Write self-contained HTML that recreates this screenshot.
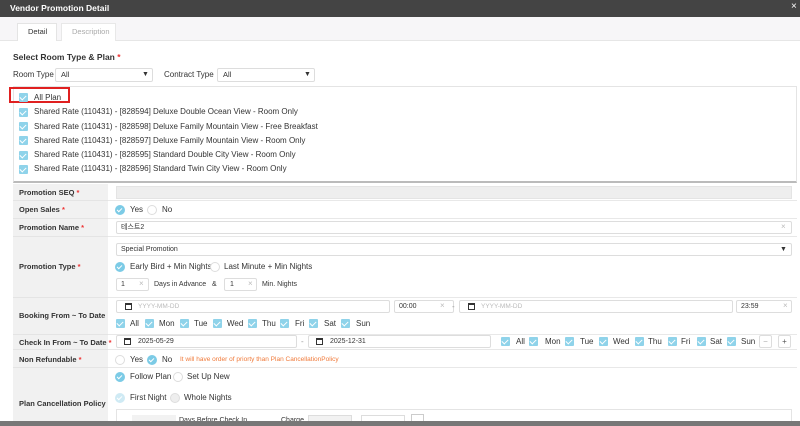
<!DOCTYPE html>
<html><head><meta charset="utf-8"><style>
*{box-sizing:border-box;margin:0;padding:0}
body{width:800px;height:426px;overflow:hidden;background:#fff;font-family:"Liberation Sans","Noto Sans CJK KR",sans-serif;font-size:8px;color:#333;position:relative}
.a{position:absolute}
.t{position:absolute;white-space:nowrap;line-height:10px}
.inp{position:absolute;border:1px solid #ddd;background:#fff;height:13px;border-radius:2px}
.cb{position:absolute;width:9px;height:9px;background:#8fd3ea;border-radius:1px}
.cb:after{content:"";position:absolute;left:2px;top:1px;width:3px;height:5px;border:solid #fff;border-width:0 1px 1px 0;transform:rotate(45deg)}
.rd{position:absolute;width:10px;height:10px;border-radius:50%;background:#7ccbe6}
.rd:after{content:"";position:absolute;left:3px;top:2px;width:2px;height:4px;border:solid #fff;border-width:0 1px 1px 0;transform:rotate(45deg)}
.ro{position:absolute;width:10px;height:10px;border-radius:50%;border:1px solid #ddd;background:#fff}
.lab{position:absolute;left:13px;width:95px;background:#f1f1f1;border-bottom:1px solid #e4e4e4}
.row{position:absolute;left:108px;right:3px;border-bottom:1px solid #e8e8e8}
.lt{position:absolute;left:19px;font-weight:bold;font-size:7.5px;color:#333;white-space:nowrap}
.req{color:#e33}
.x{color:#bbb;position:absolute}
.cal{position:absolute;width:7px;height:7px;border:1px solid #333;border-top-width:2px}
</style></head><body>
<div class="a" style="left:0;top:0;width:800px;height:17px;background:#444"></div>
<div class="t" style="left:10px;top:3px;color:#fff;font-weight:bold;font-size:8.5px">Vendor Promotion Detail</div>
<div class="t" style="left:791px;top:2px;color:#fff;font-size:10px">×</div>
<div class="a" style="left:0;top:17px;width:800px;height:24px;background:#f7f6f8;border-bottom:1px solid #e6e6e6"></div>
<div class="a" style="left:17px;top:23px;width:40px;height:18px;background:#fff;border:1px solid #e4e4e4;border-bottom:none"></div>
<div class="t" style="left:28px;top:27px;font-size:7.5px">Detail</div>
<div class="a" style="left:61px;top:23px;width:55px;height:18px;background:#fff;border:1px solid #e8e8e8;border-bottom:none"></div>
<div class="t" style="left:72px;top:27px;font-size:7.5px;color:#aaa">Description</div>
<div class="t" style="left:13px;top:52px;font-weight:bold;font-size:8.5px">Select Room Type &amp; Plan <span class="req">*</span></div>
<div class="t" style="left:13px;top:70px;font-size:8px">Room Type</div>
<div class="inp" style="left:55px;top:68px;width:98px;height:14px"></div>
<div class="t" style="left:61px;top:70px;font-size:7.5px">All</div>
<div class="t" style="left:142px;top:70px;font-size:7px">▼</div>
<div class="t" style="left:164px;top:70px;font-size:8px">Contract Type</div>
<div class="inp" style="left:217px;top:68px;width:98px;height:14px"></div>
<div class="t" style="left:223px;top:70px;font-size:7.5px">All</div>
<div class="t" style="left:304px;top:70px;font-size:7px">▼</div>
<div class="a" style="left:13px;top:86px;width:784px;height:97px;border:1px solid #e4e4e4;border-bottom:2px solid #bbb"></div>
<div class="a" style="left:9px;top:87px;width:61px;height:16px;border:2px solid #e02020"></div>
<div class="cb" style="left:19px;top:93px"></div><div class="t" style="left:34px;top:93px">All Plan</div>
<div class="cb" style="left:19px;top:108px"></div><div class="t" style="left:34px;top:107px">Shared Rate (110431) - [828594] Deluxe Double Ocean View - Room Only</div>
<div class="cb" style="left:19px;top:122px"></div><div class="t" style="left:34px;top:122px">Shared Rate (110431) - [828598] Deluxe Family Mountain View - Free Breakfast</div>
<div class="cb" style="left:19px;top:136px"></div><div class="t" style="left:34px;top:136px">Shared Rate (110431) - [828597] Deluxe Family Mountain View - Room Only</div>
<div class="cb" style="left:19px;top:151px"></div><div class="t" style="left:34px;top:150px">Shared Rate (110431) - [828595] Standard Double City View - Room Only</div>
<div class="cb" style="left:19px;top:165px"></div><div class="t" style="left:34px;top:164px">Shared Rate (110431) - [828596] Standard Twin City View - Room Only</div>

<div class="lab" style="top:184px;height:17px"><div class="lt" style="top:4px;left:6px">Promotion SEQ <span class="req">*</span></div></div>
<div class="row" style="top:184px;height:17px"></div>
<div class="a" style="left:116px;top:186px;width:676px;height:13px;background:#eee;border:1px solid #e4e4e4"></div>
<div class="lab" style="top:201px;height:18px"><div class="lt" style="top:4px;left:6px">Open Sales <span class="req">*</span></div></div>
<div class="row" style="top:201px;height:18px"></div>
<div class="rd" style="left:115px;top:205px"></div><div class="t" style="left:130px;top:205px">Yes</div>
<div class="ro" style="left:147px;top:205px"></div><div class="t" style="left:162px;top:205px">No</div>
<div class="lab" style="top:219px;height:18px"><div class="lt" style="top:4px;left:6px">Promotion Name <span class="req">*</span></div></div>
<div class="row" style="top:219px;height:18px"></div>
<div class="inp" style="left:116px;top:221px;width:676px"></div>
<div class="t" style="left:121px;top:223px;font-size:7px">테스트2</div><div class="x" style="left:781px;top:222px">×</div>
<div class="lab" style="top:237px;height:61px"><div class="lt" style="top:25px;left:6px">Promotion Type <span class="req">*</span></div></div>
<div class="row" style="top:237px;height:61px"></div>
<div class="inp" style="left:116px;top:243px;width:676px"></div>
<div class="t" style="left:121px;top:245px;font-size:7px">Special Promotion</div><div class="t" style="left:780px;top:245px;font-size:7px">▼</div>
<div class="rd" style="left:115px;top:262px"></div><div class="t" style="left:130px;top:262px">Early Bird + Min Nights</div>
<div class="ro" style="left:210px;top:262px"></div><div class="t" style="left:224px;top:262px">Last Minute + Min Nights</div>
<div class="inp" style="left:116px;top:278px;width:33px"></div><div class="t" style="left:121px;top:280px;font-size:7px">1</div><div class="x" style="left:139px;top:279px">×</div>
<div class="t" style="left:154px;top:280px;font-size:7px">Days in Advance &nbsp;&nbsp;&amp;</div>
<div class="inp" style="left:224px;top:278px;width:33px"></div><div class="t" style="left:230px;top:280px;font-size:7px">1</div><div class="x" style="left:248px;top:279px">×</div>
<div class="t" style="left:262px;top:280px;font-size:7px">Min. Nights</div>
<div class="lab" style="top:298px;height:37px"><div class="lt" style="top:13px;left:6px">Booking From ~ To Date</div></div>
<div class="row" style="top:298px;height:37px"></div>
<div class="inp" style="left:116px;top:300px;width:274px"></div><div class="cal" style="left:125px;top:303px"></div><div class="t" style="left:138px;top:302px;font-size:6.5px;color:#bbb">YYYY-MM-DD</div>
<div class="inp" style="left:394px;top:300px;width:60px"></div><div class="t" style="left:399px;top:302px;font-size:7px">00:00</div><div class="x" style="left:440px;top:301px">×</div>
<div class="t" style="left:452px;top:302px;color:#999">-</div>
<div class="inp" style="left:459px;top:300px;width:274px"></div><div class="cal" style="left:468px;top:303px"></div><div class="t" style="left:481px;top:302px;font-size:6.5px;color:#bbb">YYYY-MM-DD</div>
<div class="inp" style="left:736px;top:300px;width:56px"></div><div class="t" style="left:741px;top:302px;font-size:7px">23:59</div><div class="x" style="left:783px;top:301px">×</div>
<div class="cb" style="left:116px;top:319px"></div><div class="t" style="left:130px;top:319px">All</div>
<div class="cb" style="left:145px;top:319px"></div><div class="t" style="left:159px;top:319px">Mon</div>
<div class="cb" style="left:180px;top:319px"></div><div class="t" style="left:194px;top:319px">Tue</div>
<div class="cb" style="left:213px;top:319px"></div><div class="t" style="left:227px;top:319px">Wed</div>
<div class="cb" style="left:248px;top:319px"></div><div class="t" style="left:262px;top:319px">Thu</div>
<div class="cb" style="left:280px;top:319px"></div><div class="t" style="left:295px;top:319px">Fri</div>
<div class="cb" style="left:309px;top:319px"></div><div class="t" style="left:324px;top:319px">Sat</div>
<div class="cb" style="left:341px;top:319px"></div><div class="t" style="left:356px;top:319px">Sun</div>
<div class="lab" style="top:335px;height:15px"><div class="lt" style="top:3px;left:6px">Check In From ~ To Date <span class="req">*</span></div></div>
<div class="row" style="top:335px;height:15px"></div>
<div class="inp" style="left:116px;top:335px;width:181px"></div><div class="cal" style="left:124px;top:338px"></div><div class="t" style="left:138px;top:337px;font-size:7px">2025-05-29</div>
<div class="t" style="left:301px;top:337px;color:#999">-</div>
<div class="inp" style="left:308px;top:335px;width:183px"></div><div class="cal" style="left:316px;top:338px"></div><div class="t" style="left:330px;top:337px;font-size:7px">2025-12-31</div>
<div class="cb" style="left:501px;top:337px"></div><div class="t" style="left:516px;top:337px">All</div>
<div class="cb" style="left:529px;top:337px"></div><div class="t" style="left:545px;top:337px">Mon</div>
<div class="cb" style="left:565px;top:337px"></div><div class="t" style="left:580px;top:337px">Tue</div>
<div class="cb" style="left:599px;top:337px"></div><div class="t" style="left:613px;top:337px">Wed</div>
<div class="cb" style="left:635px;top:337px"></div><div class="t" style="left:648px;top:337px">Thu</div>
<div class="cb" style="left:668px;top:337px"></div><div class="t" style="left:681px;top:337px">Fri</div>
<div class="cb" style="left:697px;top:337px"></div><div class="t" style="left:710px;top:337px">Sat</div>
<div class="cb" style="left:727px;top:337px"></div><div class="t" style="left:741px;top:337px">Sun</div>
<div class="inp" style="left:759px;top:335px;width:13px;text-align:center;color:#aaa;line-height:11px">−</div>
<div class="inp" style="left:778px;top:335px;width:13px;text-align:center;color:#555;line-height:11px">+</div>
<div class="lab" style="top:350px;height:18px"><div class="lt" style="top:5px;left:6px">Non Refundable <span class="req">*</span></div></div>
<div class="row" style="top:350px;height:18px"></div>
<div class="ro" style="left:115px;top:355px"></div><div class="t" style="left:130px;top:355px">Yes</div>
<div class="rd" style="left:147px;top:355px"></div><div class="t" style="left:162px;top:355px">No</div>
<div class="t" style="left:180px;top:355px;font-size:6.5px;color:#f07a3a">It will have order of priorty than Plan CancellationPolicy</div>
<div class="lab" style="top:368px;height:58px"><div class="lt" style="top:31px;left:6px">Plan Cancellation Policy</div></div>
<div class="rd" style="left:115px;top:372px"></div><div class="t" style="left:130px;top:372px">Follow Plan</div>
<div class="ro" style="left:173px;top:372px"></div><div class="t" style="left:187px;top:372px">Set Up New</div>
<div class="rd" style="left:115px;top:393px;background:#cfeaf4"></div><div class="t" style="left:130px;top:393px">First Night</div>
<div class="ro" style="left:170px;top:393px;background:#eee"></div><div class="t" style="left:184px;top:393px">Whole Nights</div>
<div class="a" style="left:116px;top:409px;width:676px;height:14px;border:1px solid #e4e4e4"></div>
<div class="a" style="left:132px;top:415px;width:44px;height:8px;background:#f2f2f2"></div>
<div class="t" style="left:179px;top:416px;font-size:7px">Days Before Check In</div>
<div class="t" style="left:281px;top:416px;font-size:7px">Charge</div>
<div class="a" style="left:308px;top:415px;width:44px;height:8px;background:#f2f2f2;border:1px solid #ddd"></div>
<div class="a" style="left:361px;top:415px;width:44px;height:8px;border:1px solid #ddd"></div>
<div class="a" style="left:411px;top:414px;width:13px;height:9px;border:1px solid #ccc"></div>
<div class="a" style="left:0;top:421px;width:800px;height:5px;background:#777"></div>
</body></html>
